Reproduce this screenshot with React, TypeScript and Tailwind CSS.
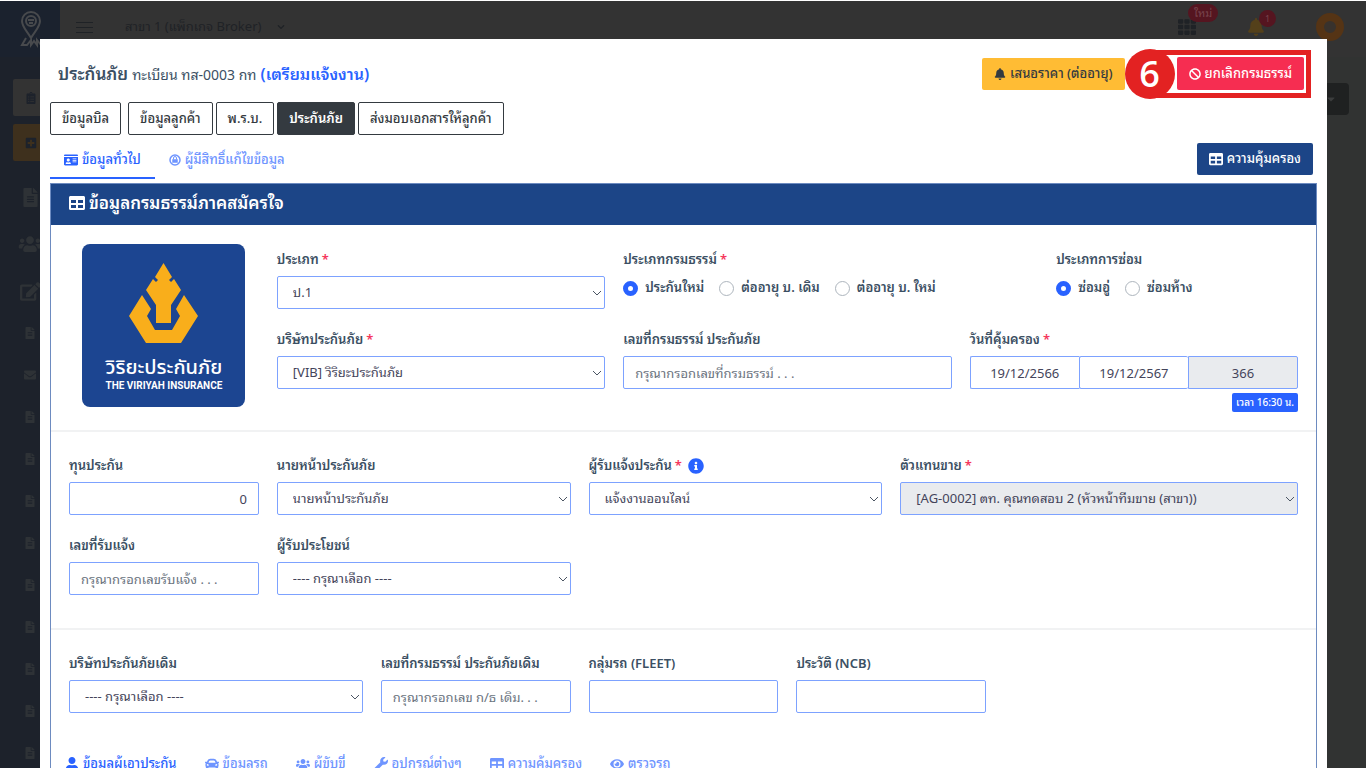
import React from "react";
import {
  FaBan,
  FaBell,
  FaCar,
  FaCaretDown,
  FaChevronDown,
  FaClipboardList,
  FaEdit,
  FaEnvelope,
  FaEye,
  FaFileAlt,
  FaIdCard,
  FaInfoCircle,
  FaPlusSquare,
  FaTable,
  FaTh,
  FaUser,
  FaUsers,
  FaWrench,
} from "react-icons/fa";

const control =
  "block h-[33px] w-full rounded-xs border border-[#7da2ff] text-[13px] text-[#44445a] placeholder:text-[#6b7480] outline-none";

type LabelProps = {
  htmlFor?: string;
  required?: boolean;
  children: React.ReactNode;
};

const Label = ({ htmlFor, required, children }: LabelProps) => (
  <label
    htmlFor={htmlFor}
    className="flex h-5 items-center whitespace-nowrap text-[13px] font-semibold text-[#3b4f63]"
  >
    {children}
    {required && <span className="ml-[3px] text-[#f5365c]">*</span>}
  </label>
);

type FieldProps = {
  id: string;
  label: string;
  span: string;
  required?: boolean;
  info?: boolean;
  value?: string;
  placeholder?: string;
  disabled?: boolean;
  align?: string;
};

const SelectField = ({ id, label, span, required, info, value, disabled }: FieldProps) => (
  <div className={`${span} flex flex-col gap-1.5`}>
    <div className="flex items-center gap-1.5">
      <Label htmlFor={id} required={required}>
        {label}
      </Label>
      {info && <FaInfoCircle className="size-4 text-[#2962ff]" />}
    </div>
    <div className="relative">
      <select
        id={id}
        disabled={disabled}
        className={`${control} appearance-none pl-[15px] pr-6 disabled:opacity-100 ${
          disabled ? "bg-[#e9ebee]" : "bg-white"
        }`}
      >
        <option>{value}</option>
      </select>
      <svg
        viewBox="0 0 10 6"
        className="pointer-events-none absolute right-[3px] top-[14px] h-[6px] w-[10px]"
        fill="none"
        stroke="#4b5563"
      >
        <path d="M1 1l4 4 4-4" />
      </svg>
    </div>
  </div>
);

const InputField = ({ id, label, span, value, placeholder, align }: FieldProps) => (
  <div className={`${span} flex flex-col gap-1.5`}>
    <Label htmlFor={id}>{label}</Label>
    <input
      id={id}
      type="text"
      defaultValue={value}
      placeholder={placeholder}
      className={`${control} bg-white px-[11px] ${align ?? ""}`}
    />
  </div>
);

type RadioProps = { name: string; label: string; checked?: boolean };

const Radio = ({ name, label, checked }: RadioProps) => (
  <label className="flex items-center gap-[7px] whitespace-nowrap text-[13px] font-semibold text-[#3b4f63]">
    <input
      type="radio"
      name={name}
      defaultChecked={checked}
      className="size-[15px] appearance-none rounded-full border border-[#adb5bd] bg-white checked:border-[5px] checked:border-[#2962ff]"
    />
    {label}
  </label>
);

const ViriyahLogo = () => (
  <div className="flex size-[163px] flex-col items-center rounded-lg bg-[#1c4591] pt-[19px] text-white">
    <svg viewBox="0 0 69 81" className="h-[81px] w-[69px]" fill="#f9ae1b">
      <path d="M34.500 0L43 14l-3 3 2 2 3-3 7 11-10 15v18H27V42L17 27l7-11 3 3 2-2-3-3z" />
      <path d="M13 32l9 14-4 7 8 14h17l8-14-4-7 8-14 14 21-17 27H17L0 53z" />
    </svg>
    <p className="mt-3 font-['Noto_Sans_Thai',sans-serif] text-xl leading-6 font-medium">วิริยะประกันภัย</p>
    <p className="font-['Roboto','Liberation_Sans',sans-serif] text-[10px] leading-3 font-bold whitespace-nowrap">
      THE VIRIYAH INSURANCE
    </p>
  </div>
);

const sideIcons = [FaFileAlt, FaEnvelope, FaFileAlt, FaFileAlt, FaFileAlt, FaFileAlt, FaFileAlt, FaFileAlt, FaFileAlt, FaFileAlt, FaFileAlt];

const Sidebar = () => (
  <aside className="flex w-[60px] shrink-0 flex-col bg-[#1d222b] text-[#2e3236]">
    <div className="flex h-14 justify-center bg-[#1b222e] pt-2.5 pl-1">
      <svg viewBox="0 0 24 38" className="h-[38px] w-6" fill="none" stroke="#484a4d" strokeWidth="2">
        <path d="M11 27C7 20 2 16 2 10a9 9 0 0 1 18 0c0 6-5 10-9 17z" />
        <circle cx="11" cy="10" r="5" />
        <path d="M8 9h6M9 12h4M6 27l-4 7h5l4-5v5l3-4 3 4v-5l4 5" />
      </svg>
    </div>
    <div className="flex flex-col gap-2 pt-[22px] pl-[13px]">
      <a href="#" aria-label="รายการ" className="flex h-[37px] items-center rounded-l-xs bg-[#333] pl-3 text-[#1d222b]">
        <FaClipboardList className="size-3" />
      </a>
      <a href="#" aria-label="เพิ่ม" className="flex h-[37px] items-center rounded-l-xs bg-[#3e301d] pl-3 text-[#1d222b]">
        <FaPlusSquare className="size-3" />
      </a>
    </div>
    <div className="flex flex-col items-center gap-7 pt-[27px] pb-[25px]">
      <FaFileAlt className="size-[19px]" />
      <FaUsers className="size-6 h-[18px]" />
      <FaEdit className="size-[21px]" />
    </div>
    <div className="flex flex-col items-center gap-[30px]">
      {sideIcons.map((Icon, i) => (
        <Icon key={i} className="size-3 shrink-0" />
      ))}
    </div>
  </aside>
);

const Topbar = () => (
  <header className="flex h-14 items-center bg-[#333] pr-[22px] pb-1 pl-4 text-[#1f2226]">
    <button type="button" aria-label="เมนู" className="flex w-[17px] flex-col gap-1">
      <span className="h-px bg-current" />
      <span className="h-px bg-current" />
      <span className="h-px bg-current" />
    </button>
    <button type="button" className="ml-8 flex items-center gap-4 text-[13px]">
      สาขา 1 (แพ็กเกจ Broker)
      <FaChevronDown className="size-2" />
    </button>
    <div className="ml-auto flex items-center gap-[51px]">
      <div className="relative">
        <FaTh className="size-[18px]" />
        <span className="absolute -top-3.5 left-2.5 rounded-full bg-[#551520] px-1.5 text-[11px] leading-[18px] whitespace-nowrap text-[#77444c]">
          ใหม่
        </span>
      </div>
      <div className="relative">
        <FaBell className="size-[18px] text-[#54401a]" />
        <span className="absolute -top-2 left-3 size-[17px] rounded-full bg-[#551520] text-center text-[9px] leading-[17px] text-[#77444c]">
          1
        </span>
      </div>
      <span className="size-7 rounded-full border-[8px] border-[#553415] bg-[#38322d]" />
    </div>
  </header>
);

const Badge = () => (
  <div className="-mt-0.5 flex justify-end">
    <span className="rounded-xs bg-[#2962ff] px-1 text-[10px] leading-[19px] font-medium text-white">
      เวลา 16:30 น.
    </span>
  </div>
);

const bills = ["ข้อมูลบิล", "ข้อมูลลูกค้า", "พ.ร.บ.", "ประกันภัย", "ส่งมอบเอกสารให้ลูกค้า"];

const bottomTabs = [
  { label: "ข้อมูลผู้เอาประกัน", icon: FaUser },
  { label: "ข้อมูลรถ", icon: FaCar },
  { label: "ผู้ขับขี่", icon: FaUsers },
  { label: "อุปกรณ์ต่างๆ", icon: FaWrench },
  { label: "ความคุ้มครอง", icon: FaTable },
  { label: "ตรวจรถ", icon: FaEye },
];

const ModalHeader = () => (
  <div className="flex items-start justify-between pr-1.5 pl-2">
    <h1 className="flex items-baseline gap-1 pt-[13px] text-sm leading-6 text-[#3b4f63]">
      <span className="text-[17px] font-semibold">ประกันภัย</span>
      ทะเบียน ทส-0003 กท
      <span className="text-base font-semibold text-[#2962ff]">(เตรียมแจ้งงาน)</span>
    </h1>
    <div className="flex items-start">
      <button
        type="button"
        className="mt-[9px] flex h-8 items-center gap-1 rounded-xs bg-[#ffbc34] px-3 text-[13px] font-medium whitespace-nowrap text-[#343a40]"
      >
        <FaBell className="size-3" />
        เสนอราคา (ต่ออายุ)
      </button>
      <div className="flex items-center">
        <span className="z-10 -mr-[25px] flex size-[50px] items-center justify-center rounded-full bg-[#e32222] font-['Open_Sans'] text-[36px] leading-none font-semibold text-white">
          6
        </span>
        <div className="border-[5px] border-[#e32222] p-0.5 pb-[3px] pl-[22px]">
          <button
            type="button"
            className="flex h-[33px] items-center gap-1 rounded-xs bg-[#f62d51] px-3 text-[13px] font-medium whitespace-nowrap text-white"
          >
            <FaBan className="size-3" />
            ยกเลิกกรมธรรม์
          </button>
        </div>
      </div>
    </div>
  </div>
);

const App = () => {
  return (
    <div className="h-screen overflow-hidden border-t border-white bg-[#313332] font-['Noto_Sans','Noto_Sans_Thai_Looped','Loma','Waree','Garuda',sans-serif]">
      <div className="flex h-full">
        <Sidebar />
        <div className="grow">
          <Topbar />
          <div className="flex justify-end pt-[26px] pr-[17px]">
            <button type="button" aria-label="ตัวเลือก" className="flex h-8 w-20 items-center justify-end rounded-sm bg-[#1f2121] pr-3 text-[#3b3d3d]">
              <FaCaretDown className="size-3" />
            </button>
          </div>
        </div>
      </div>

      <div role="dialog" className="fixed inset-x-0 top-[39px] bottom-0 mr-[39px] ml-10 overflow-hidden bg-white px-2.5 pt-[10px]">
        <ModalHeader />
        <nav className="mt-[3px] flex gap-[3px]">
          {bills.map((bill, i) => (
            <button
              key={bill}
              type="button"
              className={`h-[33px] rounded-xs border border-[#343a40] px-[11px] text-[13px] whitespace-nowrap first:mr-1 ${
                i === 3 ? "bg-[#343a40] font-semibold text-white" : "bg-white font-medium text-[#343a40]"
              }`}
            >
              {bill}
            </button>
          ))}
        </nav>
        <div className="mt-[7px] flex items-start justify-between pr-1">
          <nav className="flex text-[13px] font-medium">
            <a href="#general" className="flex h-[37px] items-center gap-1 border-b-2 border-[#2962ff] px-3.5 whitespace-nowrap text-[#2962ff]">
              <FaIdCard className="size-3.5" />
              ข้อมูลทั่วไป
            </a>
            <a href="#permission" className="flex h-[37px] items-center gap-1 border-b-2 border-transparent px-3.5 whitespace-nowrap text-[#6f95ff]">
              <svg viewBox="0 0 24 24" className="size-3" fill="none" stroke="currentColor" strokeWidth="3">
                <circle cx="12" cy="12" r="10" />
                <path d="M7 11h10v6H7z" fill="currentColor" strokeWidth="1" />
                <path d="M9 11V8a3 3 0 0 1 6 0v3" strokeWidth="2" />
              </svg>
              ผู้มีสิทธิ์แก้ไขข้อมูล
            </a>
          </nav>
          <button
            type="button"
            className="mt-px flex h-8 items-center gap-1 rounded-xs bg-[#1c4587] px-3 text-[13px] font-medium whitespace-nowrap text-white"
          >
            <FaTable className="size-3.5" />
            ความคุ้มครอง
          </button>
        </div>

        <section className="mt-1 border border-[#6d8bc0]">
          <h2 className="flex h-[41px] items-center gap-1 bg-[#1c4587] px-[18px] pb-1 text-[17px] font-semibold text-white">
            <FaTable className="size-4" />
            ข้อมูลกรมธรรม์ภาคสมัครใจ
          </h2>

          <div className="grid grid-cols-12 gap-x-[18px] px-[18px] pt-[19px] pb-[18px]">
            <div className="col-span-2 flex items-start justify-center">
              <ViriyahLogo />
            </div>
            <div className="col-span-10 grid grid-cols-12 gap-x-[18px] gap-y-[21px] pt-1.5">
              <SelectField id="type" label="ประเภท" span="col-span-4" required value="ป.1" />
              <div className="col-span-5 flex flex-col gap-1.5">
                <Label required>ประเภทกรมธรรม์</Label>
                <div className="flex h-6 items-center gap-[15px]">
                  <Radio name="policy" label="ประกันใหม่" checked />
                  <Radio name="policy" label="ต่ออายุ บ. เดิม" />
                  <Radio name="policy" label="ต่ออายุ บ. ใหม่" />
                </div>
              </div>
              <div className="col-span-3 flex flex-col gap-1.5">
                <Label>ประเภทการซ่อม</Label>
                <div className="flex h-6 items-center gap-[15px]">
                  <Radio name="repair" label="ซ่อมอู่" checked />
                  <Radio name="repair" label="ซ่อมห้าง" />
                </div>
              </div>
              <SelectField id="company" label="บริษัทประกันภัย" span="col-span-4" required value="[VIB] วิริยะประกันภัย" />
              <InputField id="policyNo" label="เลขที่กรมธรรม์ ประกันภัย" span="col-span-4" placeholder="กรุณากรอกเลขที่กรมธรรม์ . . ." />
              <div className="col-span-4 flex flex-col gap-1.5">
                <Label htmlFor="start" required>
                  วันที่คุ้มครอง
                </Label>
                <div className="flex">
                  <input id="start" defaultValue="19/12/2566" className={`${control} rounded-r-none border-r-0 bg-white text-center`} />
                  <input aria-label="สิ้นสุด" defaultValue="19/12/2567" className={`${control} rounded-none border-r-0 bg-white text-center`} />
                  <input aria-label="จำนวนวัน" readOnly value="366" className={`${control} rounded-l-none bg-[#e9ebee] text-center`} />
                </div>
                <Badge />
              </div>
            </div>
          </div>

          <div className="grid grid-cols-12 gap-x-[18px] gap-y-[21px] border-t-2 border-[#f1f2f3] px-[18px] pt-6 pb-[33px]">
            <InputField id="sum" label="ทุนประกัน" span="col-span-2" value="0" align="text-right" />
            <SelectField id="broker" label="นายหน้าประกันภัย" span="col-span-3" value="นายหน้าประกันภัย" />
            <SelectField id="receiver" label="ผู้รับแจ้งประกัน" span="col-span-3" required info value="แจ้งงานออนไลน์" />
            <SelectField id="agent" label="ตัวแทนขาย" span="col-span-4" required disabled value="[AG-0002] ตท. คุณทดสอบ 2 (หัวหน้าทีมขาย (สาขา))" />
            <InputField id="notifyNo" label="เลขที่รับแจ้ง" span="col-span-2" placeholder="กรุณากรอกเลขรับแจ้ง . . ." />
            <SelectField id="beneficiary" label="ผู้รับประโยชน์" span="col-span-3" value="---- กรุณาเลือก ----" />
          </div>

          <div className="grid grid-cols-12 gap-x-[18px] border-t-2 border-[#f1f2f3] px-[18px] pt-6 pb-[33px]">
            <SelectField id="oldCompany" label="บริษัทประกันภัยเดิม" span="col-span-3" value="---- กรุณาเลือก ----" />
            <InputField id="oldPolicyNo" label="เลขที่กรมธรรม์ ประกันภัยเดิม" span="col-span-2" placeholder="กรุณากรอกเลข ก/ธ เดิม. . ." />
            <InputField id="fleet" label="กลุ่มรถ (FLEET)" span="col-span-2" />
            <InputField id="ncb" label="ประวัติ (NCB)" span="col-span-2" />
          </div>

          <nav className="flex text-[13px] font-medium">
            {bottomTabs.map(({ label, icon: Icon }, i) => (
              <a
                key={label}
                href={`#tab-${i}`}
                className={`flex h-9 items-center gap-1 px-3.5 whitespace-nowrap ${
                  i === 0 ? "text-[#2962ff]" : "text-[#6f95ff]"
                }`}
              >
                <Icon className="size-3.5" />
                {label}
              </a>
            ))}
          </nav>
        </section>
      </div>
    </div>
  );
};

export default App;
